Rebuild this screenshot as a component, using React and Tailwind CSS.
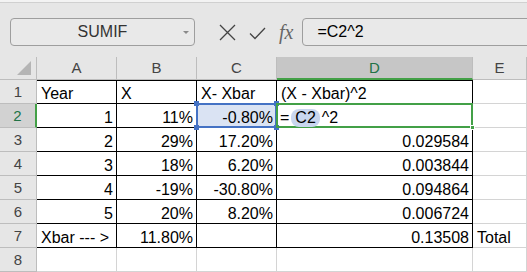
const cols = ['A', 'B', 'C', 'D', 'E'];

const rows = [
  ['Year', 'X', 'X- Xbar', '(X - Xbar)^2', ''],
  ['1', '11%', '-0.80%', null, ''],
  ['2', '29%', '17.20%', '0.029584', ''],
  ['3', '18%', '6.20%', '0.003844', ''],
  ['4', '-19%', '-30.80%', '0.094864', ''],
  ['5', '20%', '8.20%', '0.006724', ''],
  ['Xbar --- >', '11.80%', '', '0.13508', 'Total'],
  ['', '', '', '', ''],
];

const isNum = (v) => /^-?[0-9.]+%?$/.test(v);

function Cell({ r, c, value }) {
  const inTable = r < 7 && c < 4;
  const border = inTable ? 'border-black' : 'border-[#d4d4d4]';
  const top = r === 0 && c < 4 ? 'border-t border-t-black' : '';
  const align = isNum(value) ? 'justify-end pr-[3px]' : 'justify-start pl-[4px]';

  if (r === 1 && c === 2) {
    return (
      <div className="relative flex items-end justify-end pr-[3px] bg-[#dae3f3] border-r border-b border-black">
        <div className="absolute -left-[1px] -top-[1px] -right-[1px] -bottom-[1px] border-2 border-[#4472c4]" />
        <div className="absolute -left-[3px] -top-[3px] w-[5px] h-[5px] bg-[#4472c4]" />
        <div className="absolute -right-[3px] -top-[3px] w-[5px] h-[5px] bg-[#4472c4]" />
        <div className="absolute -left-[3px] -bottom-[3px] w-[5px] h-[5px] bg-[#4472c4]" />
        <div className="absolute -right-[3px] -bottom-[3px] w-[5px] h-[5px] bg-[#4472c4]" />
        <span className="relative">{value}</span>
      </div>
    );
  }

  if (r === 1 && c === 3) {
    return (
      <div className="relative flex items-end pl-[3px] border-r border-b border-black">
        <div className="absolute -left-[1px] -top-[1px] -right-[1px] -bottom-[1px] border-2 border-[#43a047]" />
        <div className="absolute -right-[3px] -bottom-[3px] w-[5px] h-[5px] bg-[#43a047] border border-white" />
        <span className="relative">=</span>
        <span className="relative ml-[2px] px-[4px] rounded-[8px] bg-[#c9d6ef]">C2</span>
        <span className="relative ml-[2px]">^2</span>
      </div>
    );
  }

  return (
    <div className={`flex items-end border-r border-b ${border} ${top} ${align} whitespace-nowrap`}>
      {value}
    </div>
  );
}

export default function App() {
  return (
    <div
      className="w-[527px] h-[272px] overflow-hidden bg-white text-black"
      style={{ fontFamily: '"Liberation Sans", Arial, sans-serif' }}
    >
      {/* formula bar */}
      <div className="h-[57px] bg-[#e6e6e6] flex flex-col">
        <div className="h-[3px] bg-[#f3f3f3] border-b border-[#d0d0d0]" />
        <div className="flex items-center h-[28px] mt-[15px]">
          <div className="ml-[10px] w-[185px] h-[28px] rounded-[4px] border border-[#9e9e9e] bg-[#e9e9e9] relative flex items-center justify-center text-[16px] text-[#333]">
            SUMIF
            <div className="absolute right-[5px] top-[12px] w-0 h-0 border-l-[3px] border-r-[3px] border-t-[3px] border-l-transparent border-r-transparent border-t-[#8a8a8a]" />
          </div>
          <svg className="ml-[24px]" width="17" height="17" viewBox="0 0 17 17">
            <path d="M1 1 L16 16 M16 1 L1 16" stroke="#444" strokeWidth="1.3" fill="none" />
          </svg>
          <svg className="ml-[13px] mt-[2px]" width="17" height="13" viewBox="0 0 17 13">
            <path d="M1 6.5 L6 11.5 L16 1" stroke="#444" strokeWidth="1.3" fill="none" />
          </svg>
          <span
            className="ml-[13px] text-[20px] italic text-[#666] leading-none"
            style={{ fontFamily: '"Liberation Serif", "Times New Roman", serif' }}
          >
            fx
          </span>
          <div className="ml-[9px] flex-1 -mr-[6px] h-[28px] rounded-[4px] border border-[#9e9e9e] bg-[#e9e9e9] flex items-center pl-[14px] text-[16px] text-black">
            =C2^2
          </div>
        </div>
      </div>

      {/* grid */}
      <div className="grid grid-cols-[37px_80px_80px_80px_196px_54px] grid-rows-[23px_repeat(8,24px)] text-[16px] leading-[18px]">
        <div className="bg-[#e6e6e6] border-r border-b border-[#bdbdbd] relative">
          <div className="absolute right-[5px] bottom-[4px] w-0 h-0" style={{ borderBottom: '14px solid #b5b5b5', borderLeft: '14px solid transparent' }} />
        </div>
        {cols.map((c) =>
          c === 'D' ? (
            <div key={c} className="bg-[#c6c6c6] border-r border-[#bdbdbd] border-b-2 border-b-[#43a047] flex items-center justify-center text-[15px] text-[#217346]">
              {c}
            </div>
          ) : (
            <div key={c} className="bg-[#e6e6e6] border-r border-b border-[#bdbdbd] flex items-center justify-center text-[15px] text-[#444]">
              {c}
            </div>
          )
        )}
        {rows.map((row, r) => [
          r === 1 ? (
            <div key={`h${r}`} className="bg-[#d2d2d2] border-b border-[#bdbdbd] border-r-2 border-r-[#43a047] flex items-center justify-center text-[15px] text-[#217346]">
              {r + 1}
            </div>
          ) : (
            <div key={`h${r}`} className="bg-[#e6e6e6] border-r border-b border-[#bdbdbd] flex items-center justify-center text-[15px] text-[#444]">
              {r + 1}
            </div>
          ),
          ...row.map((v, c) => <Cell key={`${r}-${c}`} r={r} c={c} value={v} />),
        ])}
      </div>
    </div>
  );
}
